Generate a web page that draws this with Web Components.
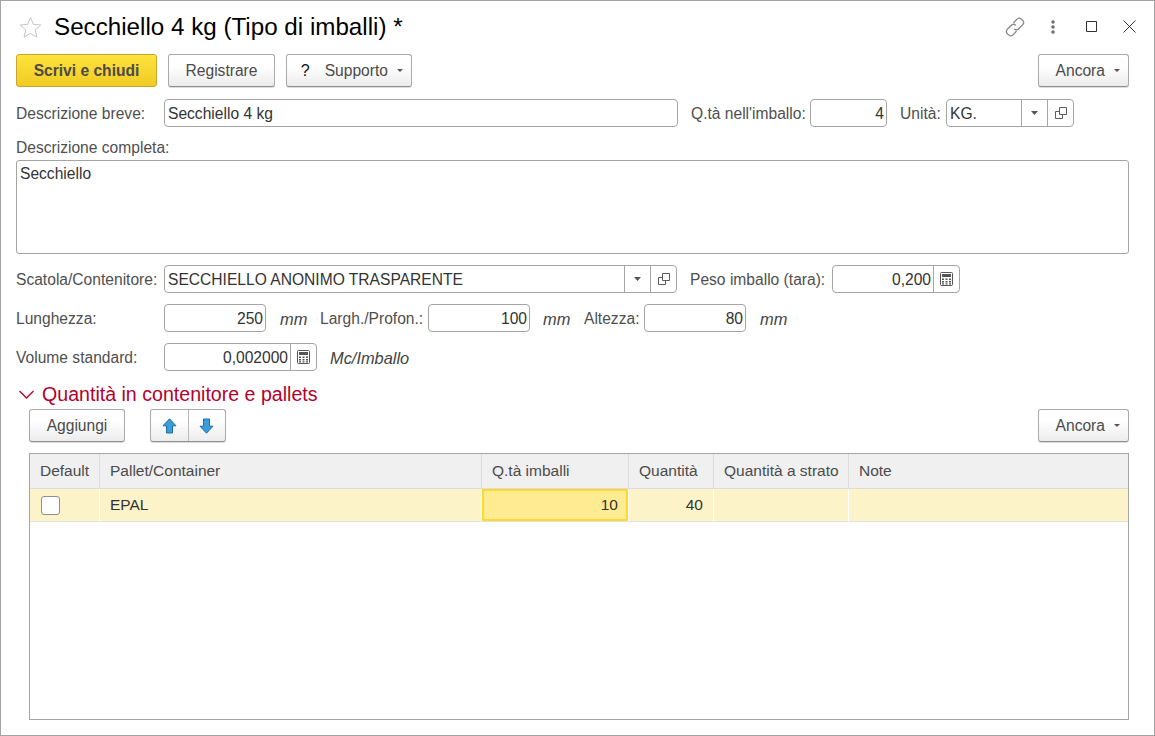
<!DOCTYPE html>
<html lang="it">
<head>
<meta charset="utf-8">
<title>Secchiello 4 kg</title>
<style>
  html, body { margin: 0; background: #fff; }
  body { font: 15.6px "Liberation Sans", Arial, sans-serif; color: #4b4b4b; }
</style>
</head>
<body>
<form-window>
  <span slot="title">Secchiello 4 kg (Tipo di imballi) *</span>

  <tool-bar>
    <push-button kind="primary" width="141">Scrivi e chiudi</push-button>
    <push-button width="107" gap="11">Registrare</push-button>
    <push-button width="126" gap="11" help menu>Supporto</push-button>
    <push-button slot="end" width="91" menu>Ancora</push-button>
  </tool-bar>

  <form-row top="12">
    <field-label width="148">Descrizione breve:</field-label>
    <text-box width="514">Secchiello 4 kg</text-box>
    <field-label gap="13" width="119">Q.tà nell'imballo:</field-label>
    <text-box width="77" right>4</text-box>
    <field-label gap="13" width="46">Unità:</field-label>
    <text-box width="128" combo>KG.</text-box>
  </form-row>

  <memo-box label="Descrizione completa:">Secchiello</memo-box>

  <form-row top="11">
    <field-label width="148">Scatola/Contenitore:</field-label>
    <text-box width="513" combo>SECCHIELLO ANONIMO TRASPARENTE</text-box>
    <field-label gap="13" width="142">Peso imballo (tara):</field-label>
    <text-box width="128" right calc>0,200</text-box>
  </form-row>

  <form-row top="11">
    <field-label width="148">Lunghezza:</field-label>
    <text-box width="102" right>250</text-box>
    <field-label gap="14" width="40" unit>mm</field-label>
    <field-label width="108">Largh./Profon.:</field-label>
    <text-box width="102" right>100</text-box>
    <field-label gap="13" width="41" unit>mm</field-label>
    <field-label width="60">Altezza:</field-label>
    <text-box width="102" right>80</text-box>
    <field-label gap="14" width="40" unit>mm</field-label>
  </form-row>

  <form-row top="11">
    <field-label width="148">Volume standard:</field-label>
    <text-box width="153" right calc>0,002000</text-box>
    <field-label gap="13" width="120" unit>Mc/Imballo</field-label>
  </form-row>

  <section-title>Quantità in contenitore e pallets</section-title>

  <tool-bar inset>
    <push-button width="96">Aggiungi</push-button>
    <arrow-pair></arrow-pair>
    <push-button slot="end" width="91" menu>Ancora</push-button>
  </tool-bar>

  <data-grid></data-grid>
</form-window>

<script>
const menuArrow = `<svg width="6" height="3" viewBox="0 0 6 3"><path d="M0 0h6L3 3z" fill="currentColor"/></svg>`;
const comboArrow = `<svg width="7" height="4" viewBox="0 0 7 4"><path d="M0 0h7L3.500 4z" fill="currentColor"/></svg>`;
const copyIcon = `<svg width="12" height="12" viewBox="0 0 12 12" fill="none" stroke="#5c5c5c"><path d="M4.500 .5h7v7h-7z"/><path d="M4.500 4.500h-4v7h7v-4"/></svg>`;
const calcIcon = `<svg width="13" height="14" viewBox="0 0 13 14"><rect x=".5" y=".5" width="12" height="13" rx="1" fill="#fff" stroke="#555"/><rect x="2" y="2" width="9" height="3" fill="#555"/><path d="M2 6.500h2v1.500H2zM5.500 6.500h2v1.500h-2zM9 6.500h2v1.500H9zM2 9h2v1.500H2zM5.500 9h2v1.500h-2zM9 9h2v1.500H9zM2 11.200h2v1.300H2zM5.500 11.200h2v1.300h-2zM9 11.200h2v1.300H9z" fill="#555"/></svg>`;

class FormWindow extends HTMLElement {
  constructor() {
    super();
    this.attachShadow({ mode: "open" }).innerHTML = `
      <style>
        :host { display: block; box-sizing: border-box; width: 1155px; height: 736px; border: 1px solid #a3a3a3; overflow: hidden; background: #fff; }
        header { display: flex; align-items: center; height: 53px; padding: 0 18px 2px 18px; box-sizing: border-box; }
        .star { width: 23px; height: 22px; margin-right: 12px; }
        h1 { flex: 1; margin: 0; font: 24.2px/28px "Liberation Sans", Arial, sans-serif; color: #000; }
        .tools { display: flex; align-items: center; }
        .tools svg { display: block; }
        main { padding: 0 25px 0 15px; }
      </style>
      <header>
        <svg class="star" viewBox="0 0 23 22" fill="none" stroke="#c4c4c4"><path d="M11.500 1.500l2.900 6.900 7.400.6-5.600 4.900 1.700 7.200-6.400-3.800-6.400 3.800 1.700-7.200L1.200 9l7.400-.6z"/></svg>
        <h1><slot name="title"></slot></h1>
        <div class="tools">
          <svg width="20" height="20" viewBox="0 0 20 20" fill="none" stroke="#8a8a8a" stroke-width="1.300" style="margin-right:26px"><path d="M8.500 6l3.200-3.600a3.400 3.400 0 0 1 4.800-.2l.9.8a3.400 3.400 0 0 1 .2 4.800L14 11.500a3.400 3.400 0 0 1-4.800.2"/><path d="M11.500 14l-3.200 3.600a3.400 3.400 0 0 1-4.800.2l-.9-.8a3.400 3.400 0 0 1-.2-4.800L6 8.500a3.400 3.400 0 0 1 4.800-.2"/></svg>
          <svg width="4" height="14" viewBox="0 0 4 14" fill="#707070" style="margin-right:31px"><circle cx="2" cy="2" r="1.800"/><circle cx="2" cy="7" r="1.800"/><circle cx="2" cy="12" r="1.800"/></svg>
          <svg width="11" height="11" viewBox="0 0 11 11" fill="none" stroke="#333" style="margin-right:26px"><path d="M.5 .5h10v10H.5z"/></svg>
          <svg width="13" height="13" viewBox="0 0 13 13" fill="none" stroke="#333"><path d="M.5 .5l12 12M12.500 .5l-12 12"/></svg>
        </div>
      </header>
      <main><slot></slot></main>`;
  }
}

class ToolBar extends HTMLElement {
  constructor() {
    super();
    this.attachShadow({ mode: "open" }).innerHTML = `
      <style>
        :host { display: flex; justify-content: space-between; height: 33px; }
        :host([inset]) { padding-left: 13px; }
        div { display: flex; }
      </style>
      <div><slot></slot></div><div><slot name="end"></slot></div>`;
  }
}

class PushButton extends HTMLElement {
  constructor() {
    super();
    this.attachShadow({ mode: "open" }).innerHTML = `
      <style>
        :host { display: block; flex: none; }
        button { display: flex; align-items: center; justify-content: center; box-sizing: border-box; width: 100%; height: 33px; padding: 0; border: 1px solid #aaa; border-bottom-color: #8f8f8f; border-radius: 3px; background: linear-gradient(#fff, #fff 35%, #ececec); font: 15.6px "Liberation Sans", Arial, sans-serif; color: #4b4b4b; box-shadow: 0 1px 0 #ddd; }
        :host([menu]) button { justify-content: flex-end; padding-right: 8px; }
        :host([kind=primary]) button { background: linear-gradient(#ffe33d, #f1ca25); border-color: #c9a62c; font-weight: bold; box-shadow: none; }
        .q { color: #111; font-size: 16px; margin-right: 15px; }
        .m { display: flex; margin-left: 9px; color: #555; }
      </style>
      <button type="button">
        ${this.hasAttribute("help") ? '<span class="q">?</span>' : ""}
        <slot></slot>
        ${this.hasAttribute("menu") ? `<span class="m">${menuArrow}</span>` : ""}
      </button>`;
  }
  connectedCallback() {
    this.style.width = this.getAttribute("width") + "px";
    if (this.hasAttribute("gap")) this.style.marginLeft = this.getAttribute("gap") + "px";
  }
}

class ArrowPair extends HTMLElement {
  constructor() {
    super();
    const arrow = d => `<svg width="15" height="16" viewBox="0 0 15 16"><path d="${d}" fill="#3c9ddb" stroke="#1f6ea8"/></svg>`;
    this.attachShadow({ mode: "open" }).innerHTML = `
      <style>
        :host { display: flex; box-sizing: border-box; width: 76px; height: 33px; margin-left: 25px; border: 1px solid #aaa; border-bottom-color: #8f8f8f; border-radius: 3px; background: linear-gradient(#fff, #fff 35%, #ececec); box-shadow: 0 1px 0 #ddd; }
        span { flex: 1; display: flex; align-items: center; justify-content: center; }
        span + span { border-left: 1px solid #bbb; }
      </style>
      <span>${arrow("M7.500 .8L14 7.800H10.500V15H4.500V7.800H1z")}</span>
      <span>${arrow("M7.500 15.200L14 8.200H10.500V1H4.500V8.200H1z")}</span>`;
  }
}

class FormRow extends HTMLElement {
  constructor() {
    super();
    this.attachShadow({ mode: "open" }).innerHTML = `
      <style>:host { display: flex; align-items: center; height: 28px; }</style><slot></slot>`;
  }
  connectedCallback() {
    this.style.marginTop = this.getAttribute("top") + "px";
  }
}

class FieldLabel extends HTMLElement {
  constructor() {
    super();
    this.attachShadow({ mode: "open" }).innerHTML = `
      <style>
        :host { display: block; flex: none; white-space: nowrap; color: #4f4f4f; padding-top: 2px; }
        :host([unit]) { font-style: italic; font-size: 16.4px; color: #444; padding-top: 3px; }
      </style><slot></slot>`;
  }
  connectedCallback() {
    this.style.width = this.getAttribute("width") + "px";
    if (this.hasAttribute("gap")) this.style.marginLeft = this.getAttribute("gap") + "px";
  }
}

class TextBox extends HTMLElement {
  constructor() {
    super();
    const combo = this.hasAttribute("combo");
    const calc = this.hasAttribute("calc");
    this.attachShadow({ mode: "open" }).innerHTML = `
      <style>
        :host { display: flex; flex: none; box-sizing: border-box; height: 28px; border: 1px solid #a5a5a5; border-radius: 4px; background: #fff; color: #333; }
        .v { flex: 1; min-width: 0; padding: 0 2px 0 3px; line-height: 28px; white-space: nowrap; overflow: hidden; }
        :host([right]) .v { text-align: right; }
        .b { flex: none; display: flex; align-items: center; justify-content: center; width: 25px; border-left: 1px solid #a5a5a5; color: #555; }
      </style>
      <div class="v"><slot></slot></div>
      ${combo ? `<div class="b">${comboArrow}</div><div class="b">${copyIcon}</div>` : ""}
      ${calc ? `<div class="b">${calcIcon}</div>` : ""}`;
  }
  connectedCallback() {
    this.style.width = this.getAttribute("width") + "px";
  }
}

class MemoBox extends HTMLElement {
  constructor() {
    super();
    this.attachShadow({ mode: "open" }).innerHTML = `
      <style>
        :host { display: block; }
        label { display: block; margin-top: 12px; height: 21px; line-height: 18px; color: #4f4f4f; }
        div { box-sizing: border-box; height: 94px; padding: 5px 3px; border: 1px solid #a5a5a5; border-radius: 3px; color: #333; line-height: 16px; }
      </style>
      <label>${this.getAttribute("label")}</label>
      <div><slot></slot></div>`;
  }
}

class SectionTitle extends HTMLElement {
  constructor() {
    super();
    this.attachShadow({ mode: "open" }).innerHTML = `
      <style>
        :host { display: flex; align-items: center; box-sizing: border-box; height: 38px; padding-top: 9px; color: #b3002d; font-size: 19.6px; }
        svg { margin: 0 8px 0 3px; }
      </style>
      <svg width="15" height="9" viewBox="0 0 15 9" fill="none" stroke="#b3002d" stroke-width="1.300"><path d="M.5 1l7 7 7-7"/></svg>
      <span><slot></slot></span>`;
  }
}

class DataGrid extends HTMLElement {
  constructor() {
    super();
    const heads = ["Default", "Pallet/Container", "Q.tà imballi", "Quantità", "Quantità a strato", "Note"];
    this.attachShadow({ mode: "open" }).innerHTML = `
      <style>
        :host { display: block; box-sizing: border-box; height: 267px; margin: 11px 0 0 13px; border: 1px solid #a5a5a5; background: #fff; color: #4b4b4b; font-size: 15.5px; }
        .g { display: grid; grid-template-columns: 70px 382px 147px 85px 135px 279px; grid-template-rows: 35px 33px; }
        .h { display: flex; align-items: center; padding: 0 10px; background: #f0f0f0; border-right: 1px solid #dcdcdc; border-bottom: 1px solid #dcdcdc; box-sizing: border-box; white-space: nowrap; }
        .c { display: flex; align-items: center; padding: 0 10px; background: #fdf3c9; border-right: 1px solid #fff; border-bottom: 1px solid #e2e2e2; box-sizing: border-box; color: #333; }
        .h:nth-child(6), .c:last-child { border-right: 0; }
        .n { justify-content: flex-end; }
        .box { box-sizing: border-box; width: 19px; height: 19px; margin-left: 1px; border: 1px solid #8f8f8f; border-radius: 3px; background: #fff; }
        .cur { background: #ffec92; box-shadow: inset 0 0 0 2px #ffd92e; }
      </style>
      <div class="g">
        ${heads.map(h => `<div class="h">${h}</div>`).join("")}
        <div class="c"><span class="box"></span></div>
        <div class="c">EPAL</div>
        <div class="c n cur">10</div>
        <div class="c n">40</div>
        <div class="c"></div>
        <div class="c"></div>
      </div>`;
  }
}

customElements.define("form-window", FormWindow);
customElements.define("tool-bar", ToolBar);
customElements.define("push-button", PushButton);
customElements.define("arrow-pair", ArrowPair);
customElements.define("form-row", FormRow);
customElements.define("field-label", FieldLabel);
customElements.define("text-box", TextBox);
customElements.define("memo-box", MemoBox);
customElements.define("section-title", SectionTitle);
customElements.define("data-grid", DataGrid);
</script>
</body>
</html>
